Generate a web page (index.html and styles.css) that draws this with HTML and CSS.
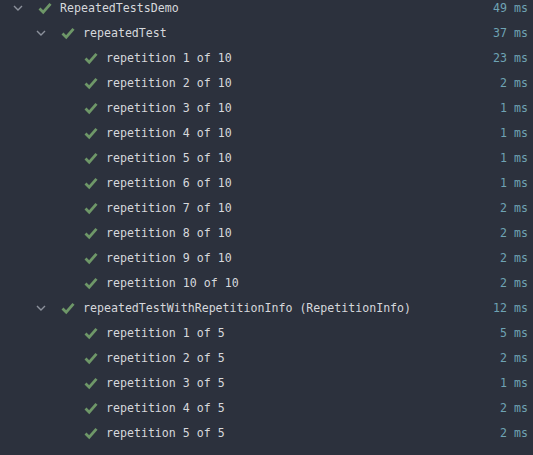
FILE: index.html
```html
<!DOCTYPE html>
<html>
<head>
<meta charset="utf-8">
<link rel="stylesheet" href="styles.css">
</head>
<body>
<svg width="0" height="0" class="defs">
  <defs>
    <symbol id="chev" viewBox="0 0 16 16"><path d="M4 6 L8 10 L12 6" fill="none" stroke="#8c919c" stroke-width="1.4"/></symbol>
    <symbol id="chk" viewBox="0 0 14 14"><path d="M1.5 7.5 L5.2 11.2 L12.5 2.8" fill="none" stroke="#6e9768" stroke-width="2.8" stroke-linejoin="miter"/></symbol>
  </defs>
</svg>
<div class="tree">
  <div class="row l1"><svg class="chev"><use href="#chev"/></svg><svg class="chk"><use href="#chk"/></svg><span class="name">RepeatedTestsDemo</span><span class="time">49 ms</span></div>
  <div class="row l2"><svg class="chev"><use href="#chev"/></svg><svg class="chk"><use href="#chk"/></svg><span class="name">repeatedTest</span><span class="time">37 ms</span></div>
  <div class="row l3"><span class="chev"></span><svg class="chk"><use href="#chk"/></svg><span class="name">repetition 1 of 10</span><span class="time">23 ms</span></div>
  <div class="row l3"><span class="chev"></span><svg class="chk"><use href="#chk"/></svg><span class="name">repetition 2 of 10</span><span class="time">2 ms</span></div>
  <div class="row l3"><span class="chev"></span><svg class="chk"><use href="#chk"/></svg><span class="name">repetition 3 of 10</span><span class="time">1 ms</span></div>
  <div class="row l3"><span class="chev"></span><svg class="chk"><use href="#chk"/></svg><span class="name">repetition 4 of 10</span><span class="time">1 ms</span></div>
  <div class="row l3"><span class="chev"></span><svg class="chk"><use href="#chk"/></svg><span class="name">repetition 5 of 10</span><span class="time">1 ms</span></div>
  <div class="row l3"><span class="chev"></span><svg class="chk"><use href="#chk"/></svg><span class="name">repetition 6 of 10</span><span class="time">1 ms</span></div>
  <div class="row l3"><span class="chev"></span><svg class="chk"><use href="#chk"/></svg><span class="name">repetition 7 of 10</span><span class="time">2 ms</span></div>
  <div class="row l3"><span class="chev"></span><svg class="chk"><use href="#chk"/></svg><span class="name">repetition 8 of 10</span><span class="time">2 ms</span></div>
  <div class="row l3"><span class="chev"></span><svg class="chk"><use href="#chk"/></svg><span class="name">repetition 9 of 10</span><span class="time">2 ms</span></div>
  <div class="row l3"><span class="chev"></span><svg class="chk"><use href="#chk"/></svg><span class="name">repetition 10 of 10</span><span class="time">2 ms</span></div>
  <div class="row l2"><svg class="chev"><use href="#chev"/></svg><svg class="chk"><use href="#chk"/></svg><span class="name">repeatedTestWithRepetitionInfo (RepetitionInfo)</span><span class="time">12 ms</span></div>
  <div class="row l3"><span class="chev"></span><svg class="chk"><use href="#chk"/></svg><span class="name">repetition 1 of 5</span><span class="time">5 ms</span></div>
  <div class="row l3"><span class="chev"></span><svg class="chk"><use href="#chk"/></svg><span class="name">repetition 2 of 5</span><span class="time">2 ms</span></div>
  <div class="row l3"><span class="chev"></span><svg class="chk"><use href="#chk"/></svg><span class="name">repetition 3 of 5</span><span class="time">1 ms</span></div>
  <div class="row l3"><span class="chev"></span><svg class="chk"><use href="#chk"/></svg><span class="name">repetition 4 of 5</span><span class="time">2 ms</span></div>
  <div class="row l3"><span class="chev"></span><svg class="chk"><use href="#chk"/></svg><span class="name">repetition 5 of 5</span><span class="time">2 ms</span></div>
</div>
</body>
</html>
```
FILE: styles.css
```css
html, body {
  margin: 0;
  padding: 0;
  background: #2c313d;
  height: 100%;
  overflow: hidden;
}
.defs {
  position: absolute;
  width: 0;
  height: 0;
}
.tree {
  margin-top: -5px;
  font-family: "DejaVu Sans Mono", "Liberation Mono", monospace;
  font-size: 11.6px;
  color: #d6d8dc;
}
.row {
  display: flex;
  align-items: center;
  height: 25px;
  padding-right: 5px;
}
.l1 { padding-left: 10px; }
.l2 { padding-left: 33px; }
.l3 { padding-left: 56px; }
.chev {
  width: 16px;
  height: 16px;
  flex: none;
  margin-right: 12px;
}
.chk {
  width: 14px;
  height: 14px;
  flex: none;
  margin-right: 8px;
}
.name {
  flex: 1;
  white-space: nowrap;
}
.time {
  color: #6fa3b4;
  white-space: nowrap;
}
```
